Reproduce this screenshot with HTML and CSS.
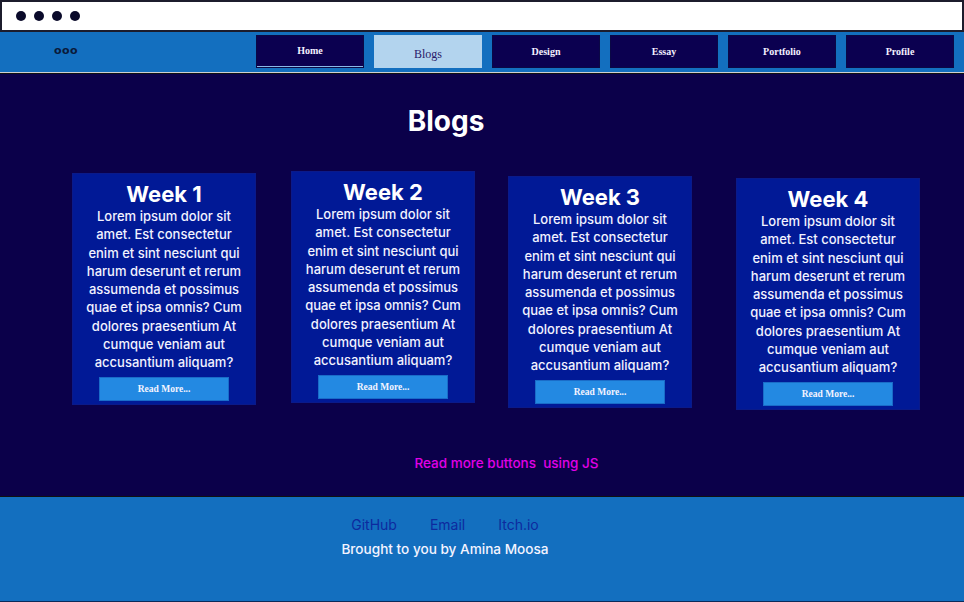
FILE: index.html
```html
<!DOCTYPE html>
<html lang="en">
<head>
<meta charset="utf-8">
<title>Blogs</title>
<link rel="stylesheet" href="styles.css">
</head>
<body>
<div class="page">
  <div class="window-bar">
    <span class="dot"></span><span class="dot"></span><span class="dot"></span><span class="dot"></span>
  </div>
  <nav class="nav">
    <div class="logo">ooo</div>
    <ul class="nav-list">
      <li class="nav-item home">Home</li>
      <li class="nav-item active">Blogs</li>
      <li class="nav-item">Design</li>
      <li class="nav-item">Essay</li>
      <li class="nav-item">Portfolio</li>
      <li class="nav-item">Profile</li>
    </ul>
  </nav>
  <main class="main">
    <h1 class="title">Blogs</h1>
    <section class="cards">
      <article class="card c1">
        <h2 class="card-title">Week 1</h2>
        <p class="card-text">Lorem ipsum dolor sit amet. Est consectetur enim et sint nesciunt qui harum deserunt et rerum assumenda et possimus quae et ipsa omnis? Cum dolores praesentium At cumque veniam aut accusantium aliquam?</p>
        <button class="read-btn">Read More...</button>
      </article>
      <article class="card c2">
        <h2 class="card-title">Week 2</h2>
        <p class="card-text">Lorem ipsum dolor sit amet. Est consectetur enim et sint nesciunt qui harum deserunt et rerum assumenda et possimus quae et ipsa omnis? Cum dolores praesentium At cumque veniam aut accusantium aliquam?</p>
        <button class="read-btn">Read More...</button>
      </article>
      <article class="card c3">
        <h2 class="card-title">Week 3</h2>
        <p class="card-text">Lorem ipsum dolor sit amet. Est consectetur enim et sint nesciunt qui harum deserunt et rerum assumenda et possimus quae et ipsa omnis? Cum dolores praesentium At cumque veniam aut accusantium aliquam?</p>
        <button class="read-btn">Read More...</button>
      </article>
      <article class="card c4">
        <h2 class="card-title">Week 4</h2>
        <p class="card-text">Lorem ipsum dolor sit amet. Est consectetur enim et sint nesciunt qui harum deserunt et rerum assumenda et possimus quae et ipsa omnis? Cum dolores praesentium At cumque veniam aut accusantium aliquam?</p>
        <button class="read-btn">Read More...</button>
      </article>
    </section>
    <p class="note">Read more buttons&nbsp; using JS</p>
  </main>
  <footer class="footer">
    <div class="links">
      <a class="link">GitHub</a>
      <a class="link">Email</a>
      <a class="link">Itch.io</a>
    </div>
    <p class="credit">Brought to you by Amina Moosa</p>
  </footer>
</div>
</body>
</html>
```
FILE: styles.css
```css
* { box-sizing: border-box; }
html, body { margin: 0; padding: 0; }
body {
  width: 964px;
  height: 602px;
  overflow: hidden;
  background: #0b004a;
  font-family: "Inter", "Noto Sans", sans-serif;
}
.page {
  display: flex;
  flex-direction: column;
  height: 602px;
}
.window-bar {
  height: 32px;
  background: #ffffff;
  border: 2px solid #1c1c2c;
  display: flex;
  align-items: center;
  gap: 8px;
  padding-left: 14px;
}
.dot {
  width: 10px;
  height: 10px;
  border-radius: 50%;
  background: #0a0a2a;
}
.nav {
  height: 41px;
  background: #136fbf;
  border-bottom: 1px solid #d0d0d0;
  box-shadow: 0 1px 0 #111;
  display: flex;
  align-items: flex-start;
}
.logo {
  width: 256px;
  padding-left: 54px;
  padding-top: 12px;
  font-size: 11px;
  font-weight: 700;
  letter-spacing: 0.5px;
  color: #0a1a3a;
  font-family: "DejaVu Sans", sans-serif;
}
.nav-list {
  list-style: none;
  margin: 3px 0 0 0;
  padding: 0;
  display: flex;
  gap: 10px;
}
.nav-item {
  width: 108px;
  height: 33px;
  background: #0b0050;
  color: #f4f0ff;
  font-family: "Liberation Serif", serif;
  font-size: 10px;
  font-weight: 700;
  display: flex;
  justify-content: center;
  align-items: center;
  border: 1px solid #0a0845;
}
.nav-item.home {
  box-shadow: inset 0 -1px 0 #8ab8e8;
  padding-bottom: 2px;
}
.nav-item.active {
  background: #b3d4ee;
  color: #2a1a6a;
  font-size: 12px;
  font-weight: 400;
  padding-top: 6px;
  border-color: #b3d4ee;
}
.main {
  height: 423px;
  display: flex;
  flex-direction: column;
}
.title {
  margin: 30px 0 0 0;
  padding-right: 72px;
  text-align: center;
  color: #ffffff;
  font-size: 28px;
  font-weight: 700;
  line-height: 36px;
}
.cards {
  display: flex;
  align-items: flex-start;
  padding-left: 72px;
  margin-top: 32px;
}
.card {
  width: 184px;
  background: #011996;
  border: 1px solid #0a1a8a;
  display: flex;
  flex-direction: column;
  align-items: center;
  padding: 8px 12px 3px;
  text-align: center;
}
.c1 { margin-top: 2px; }
.c2 { margin-left: 35px; margin-top: 0; }
.c3 { margin-left: 33px; margin-top: 5px; }
.c4 { margin-left: 44px; margin-top: 7px; }
.card-title {
  margin: 0;
  color: #ffffff;
  font-size: 22px;
  font-weight: 700;
  line-height: 25px;
}
.card-text {
  margin: 0;
  color: #f2f2ff;
  font-size: 13px;
  font-weight: 500;
  line-height: 18.25px;
}
.read-btn {
  margin-top: 6px;
  width: 130px;
  height: 24px;
  flex: none;
  background: #2389e2;
  border: 1px solid #1a6cc8;
  color: #f4f4ff;
  font-family: "Liberation Serif", serif;
  font-size: 9.5px;
  font-weight: 700;
  padding: 0;
}
.note {
  margin: 44px 0 0 0;
  padding-left: 49px;
  text-align: center;
  color: #e100e6;
  font-size: 13.5px;
  font-weight: 500;
  line-height: 18px;
}
.footer {
  flex: 1;
  background: #136fbf;
  border-top: 1px solid #111;
  border-bottom: 1px solid #0a2a5a;
  display: flex;
  flex-direction: column;
  align-items: center;
  padding-right: 74px;
  padding-top: 18px;
}
.links {
  display: flex;
  gap: 33px;
}
.link {
  color: #0d2a9e;
  font-size: 14px;
  line-height: 20px;
}
.credit {
  margin: 4px 0 0 0;
  color: #f4f4ff;
  font-size: 13.6px;
  font-weight: 500;
  line-height: 20px;
}
```
